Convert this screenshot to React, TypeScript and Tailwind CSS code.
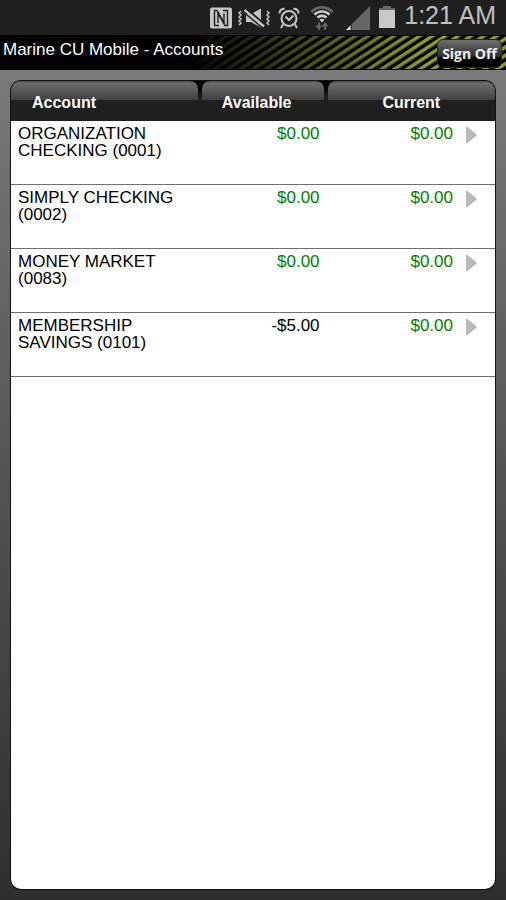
type Account = {
  name: string
  number: string
  available: string
  current: string
}

const accounts: Account[] = [
  { name: "ORGANIZATION CHECKING", number: "0001", available: "$0.00", current: "$0.00" },
  { name: "SIMPLY CHECKING", number: "0002", available: "$0.00", current: "$0.00" },
  { name: "MONEY MARKET", number: "0083", available: "$0.00", current: "$0.00" },
  { name: "MEMBERSHIP SAVINGS", number: "0101", available: "-$5.00", current: "$0.00" },
]

const amountColor = (amount: string) => (amount.startsWith("-") ? "text-black" : "text-[#008000]")

function NfcIcon() {
  return (
    <svg className="h-[22px] w-[22px]" viewBox="0 0 22 22">
      <rect width="22" height="21" y="0.5" rx="2" fill="#c6c6c6" />
      <g fill="none" stroke="#1f1f1f" strokeWidth="1.4">
        <path d="M9 18.500H4.500V3.500H7L14 15.500V6.500" />
        <path d="M13 3.500h4.500v15H15L8 6.500V16" />
      </g>
    </svg>
  )
}

function MuteIcon() {
  return (
    <svg className="h-[22px] w-8" viewBox="0 0 32 22" fill="none">
      <path d="M8 7h5L23 1.500v19L13 15H8z" fill="#c6c6c6" />
      <path d="M8 1.500 27 17.500" stroke="#1f1f1f" strokeWidth="2" />
      <path d="M6.500 3 26 19.500" stroke="#c6c6c6" strokeWidth="2.400" />
      <path d="M5.500 5 24 20.500" stroke="#1f1f1f" strokeWidth="1.500" />
      <path d="M3 4 1 6l2 2-2 2 2 2-2 2 2 2-2 2M29 4l2 2-2 2 2 2-2 2 2 2-2 2 2 2" stroke="#c6c6c6" strokeWidth="1.500" />
    </svg>
  )
}

function AlarmIcon() {
  return (
    <svg className="h-[22px] w-[22px]" viewBox="0 0 22 22" fill="none" stroke="#c6c6c6">
      <circle cx="11" cy="11.500" r="7.500" strokeWidth="2" />
      <path d="M7.500 9.500 11 13l4.500-4.500" strokeWidth="2" />
      <path d="M1.500 6.500C1.500 3.500 3.500 1.800 6.500 1.800M20.500 6.500c0-3-2-4.700-5-4.700M5 17.500 3 21M17 17.500l2 3.500" strokeWidth="2" />
    </svg>
  )
}

function WifiIcon() {
  return (
    <svg className="h-[26px] w-6" viewBox="0 0 24 26" fill="none">
      <path d="M1.500 7C7.500.8 16.500.8 22.500 7" stroke="#666" strokeWidth="2.800" />
      <path d="M4.500 9.700c4.300-4.400 10.700-4.400 15 0M7.500 12.700c2.500-2.600 6.500-2.600 9 0" stroke="#d0d0d0" strokeWidth="2.400" />
      <path d="M9.500 14.800c1.500-1.400 3.500-1.400 5 0L12 17.500z" fill="#d0d0d0" />
      <path d="M9 17.500v7M15 19v6" stroke="#666" strokeWidth="2" />
      <path d="M5 20.500h7L9 25zM11.500 21.500h7L15 17z" fill="#666" />
    </svg>
  )
}

function SignalIcon() {
  return (
    <svg className="h-6 w-6" viewBox="0 0 24 24">
      <path d="M24 0v24H0z" fill="#666" />
      <path d="M5 18v6" stroke="#1f1f1f" />
      <path d="M4.500 19.500V24H0z" fill="#ddd" />
    </svg>
  )
}

function BatteryIcon() {
  return (
    <svg className="h-6 w-[18px]" viewBox="0 0 18 24">
      <path d="M5 0h8v2h4v3H1V2h4z" fill="#666" />
      <path d="M1 4h16v18H1z" fill="#c9c9c9" />
    </svg>
  )
}

function StatusBar() {
  return (
    <div className="flex h-[35px] items-center justify-end bg-[#1f1f1f] pr-[10px]">
      <NfcIcon />
      <div className="ml-1.5 flex items-center gap-2">
        <MuteIcon />
        <AlarmIcon />
      </div>
      <div className="ml-2.5 flex items-center gap-3">
        <WifiIcon />
        <SignalIcon />
      </div>
      <div className="ml-2 flex items-center gap-2">
        <BatteryIcon />
        <span className="pb-1.5 text-[25px] leading-7 text-[#c0c0c0]">1:21 AM</span>
      </div>
    </div>
  )
}

function TitleBar() {
  return (
    <header className="relative flex h-[35px] items-start justify-between bg-black pl-[3px] pr-1">
      <div className="absolute inset-y-px right-0 w-[320px] bg-[repeating-linear-gradient(147deg,#8c9c3a_0px,#8c9c3a_2px,#000_4px,#000_6px,#8c9c3a_7px)] mask-l-from-25%" />
      <h1 className="relative pt-[5px] text-[17px] leading-5 text-white">Marine CU Mobile - Accounts</h1>
      <button
        type="button"
        className="relative mt-1 h-[29px] w-[65px] rounded-md border border-[#222] bg-linear-to-b from-[#707070] via-[#303030] via-60% to-black to-70% font-['Open_Sans',sans-serif] text-[14px] font-bold leading-6 text-[#eee]"
      >
        Sign Off
      </button>
    </header>
  )
}

const tabFace =
  "h-10 rounded-t-lg bg-[linear-gradient(#484848,#6c6c6c_2px,#404040_19px,#1f1f1f_19px)] pt-3 text-base leading-5 font-bold text-white"

function AccountsTable() {
  return (
    <table className="w-full table-fixed border-separate border-spacing-0">
      <thead>
        <tr className="bg-linear-to-b from-black to-[#1f1f1f] to-40%">
          <th className="w-[39%] p-0 pr-0.5 text-left">
            <div className={tabFace + " pl-[21px]"}>Account</div>
          </th>
          <th className="w-[26%] p-0 px-0.5">
            <div className={tabFace + " pr-3"}>Available</div>
          </th>
          <th className="p-0 pl-0.5">
            <div className={tabFace}>Current</div>
          </th>
        </tr>
      </thead>
      <tbody>
        {accounts.map((account) => (
          <tr key={account.number} className="h-16 align-top *:border-b *:border-[#707070]">
            <td className="py-1 pl-[7px] pr-4 text-[17px] leading-[17px] text-black">
              {account.name} ({account.number})
            </td>
            <td className={`py-1 pr-1.5 text-right text-[17px] leading-[17px] ${amountColor(account.available)}`}>
              {account.available}
            </td>
            <td className="py-1 pr-[18px]">
              <div className="flex justify-end gap-[13px]">
                <span className={`text-[17px] leading-[17px] ${amountColor(account.current)}`}>{account.current}</span>
                <svg className="mt-px h-[18px] w-[11px]" viewBox="0 0 11 18">
                  <path d="M0 1.500Q0 0 1.500 1L10.500 8.200Q11 9 10.500 9.800L1.500 17Q0 18 0 16.500z" fill="#b9b9b5" />
                </svg>
              </div>
            </td>
          </tr>
        ))}
      </tbody>
    </table>
  )
}

export default function App() {
  return (
    <div className="flex min-h-screen flex-col font-['Liberation_Sans',sans-serif]">
      <StatusBar />
      <TitleBar />
      <main className="flex flex-1 flex-col bg-linear-to-b from-[#7a7a7a] to-[#2d2f2e] p-[11px]">
        <section className="flex-1 overflow-hidden rounded-[10px] bg-white shadow-[0_0_0_1px_#111]">
          <AccountsTable />
        </section>
      </main>
    </div>
  )
}
